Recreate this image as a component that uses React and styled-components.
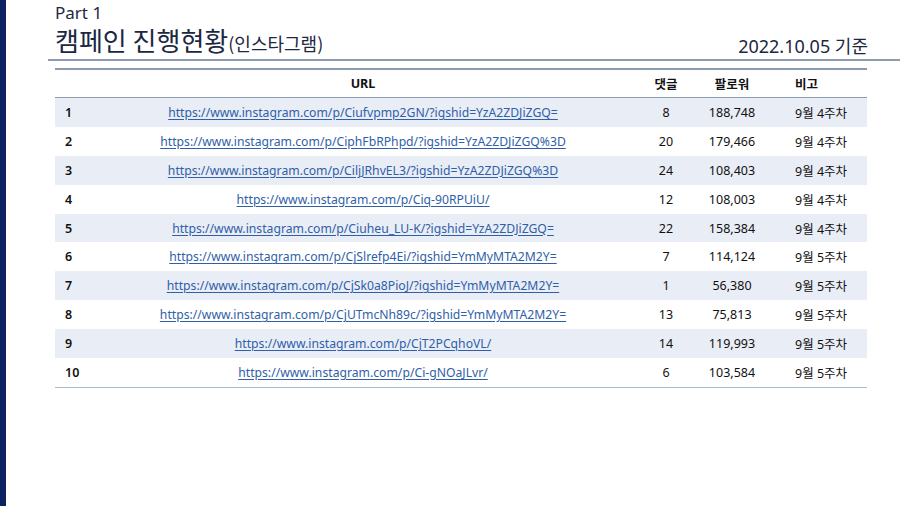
import styled, { createGlobalStyle } from 'styled-components';

const GlobalStyle = createGlobalStyle`
  html, body {
    margin: 0;
    padding: 0;
    background: #fff;
  }
  body {
    font-family: 'Noto Sans', 'Noto Sans CJK KR', sans-serif;
  }
`;

const Page = styled.div`
  width: 900px;
  height: 506px;
  display: flex;
  background: #fff;
  overflow: hidden;
`;

const SideBar = styled.div`
  width: 6px;
  background: #0b2460;
  flex-shrink: 0;
`;

const Content = styled.div`
  flex: 1;
  display: flex;
  flex-direction: column;
`;

const Header = styled.div`
  height: 61px;
  box-sizing: border-box;
  margin-left: 42px;
  padding: 0 32px 0 7px;
  border-bottom: 2px solid #8b9bb0;
  display: flex;
  align-items: flex-end;
  justify-content: space-between;
`;

const TitleBlock = styled.div`
  display: flex;
  flex-direction: column;
  margin-bottom: 4px;
`;

const PartLabel = styled.div`
  font-family: 'Noto Sans', 'Noto Sans CJK KR', sans-serif;
  font-size: 17px;
  line-height: 17px;
  margin-bottom: 4px;
  color: #1c2742;
`;

const Title = styled.h1`
  margin: 0;
  font-family: 'Noto Sans CJK KR', sans-serif;
  font-size: 26px;
  line-height: 30px;
  height: 30px;
  font-weight: 400;
  color: #1c2742;
  white-space: nowrap;
`;

const Sub = styled.span`
  font-size: 18px;
  line-height: 1;
`;

const DateText = styled.div`
  font-family: 'Noto Sans', 'Noto Sans CJK KR', sans-serif;
  font-size: 18px;
  line-height: 22px;
  color: #1c2742;
  margin-bottom: 2px;
`;

const TableWrap = styled.div`
  margin: 7px 0 0 49px;
  width: 812px;
`;

const Table = styled.table`
  width: 100%;
  border-collapse: collapse;
  table-layout: fixed;
  font-family: 'Noto Sans', 'Noto Sans CJK KR', sans-serif;
  font-size: 12.5px;
  color: #111;
  border-top: 2px solid #8b9bb0;
  border-bottom: 1px solid #a9bfd2;
`;

const Th = styled.th`
  height: 27px;
  padding: 0 0 0 ${p => p.$pl || 0}px;
  font-weight: 700;
  font-size: 12.5px;
  text-align: ${p => p.$align || 'center'};
  border-bottom: 1.5px solid #8b9bb0;
`;

const Row = styled.tr`
  background: ${p => (p.$odd ? '#e9edf6' : '#fff')};
`;

const Td = styled.td`
  height: 28.9px;
  padding: 0 0 0 ${p => p.$pl || 0}px;
  text-align: ${p => p.$align || 'center'};
  font-weight: ${p => (p.$bold ? 600 : 400)};
  white-space: nowrap;
`;

const Link = styled.a`
  color: #2f5fa8;
  font-size: 12.2px;
  text-decoration: underline;
  text-underline-offset: 2px;
`;

const rows = [
  ['https://www.instagram.com/p/Ciufvpmp2GN/?igshid=YzA2ZDJiZGQ=', '8', '188,748', '9월 4주차'],
  ['https://www.instagram.com/p/CiphFbRPhpd/?igshid=YzA2ZDJiZGQ%3D', '20', '179,466', '9월 4주차'],
  ['https://www.instagram.com/p/CiljJRhvEL3/?igshid=YzA2ZDJiZGQ%3D', '24', '108,403', '9월 4주차'],
  ['https://www.instagram.com/p/Ciq-90RPUiU/', '12', '108,003', '9월 4주차'],
  ['https://www.instagram.com/p/Ciuheu_LU-K/?igshid=YzA2ZDJiZGQ=', '22', '158,384', '9월 4주차'],
  ['https://www.instagram.com/p/CjSlrefp4Ei/?igshid=YmMyMTA2M2Y=', '7', '114,124', '9월 5주차'],
  ['https://www.instagram.com/p/CjSk0a8PioJ/?igshid=YmMyMTA2M2Y=', '1', '56,380', '9월 5주차'],
  ['https://www.instagram.com/p/CjUTmcNh89c/?igshid=YmMyMTA2M2Y=', '13', '75,813', '9월 5주차'],
  ['https://www.instagram.com/p/CjT2PCqhoVL/', '14', '119,993', '9월 5주차'],
  ['https://www.instagram.com/p/Ci-gNOaJLvr/', '6', '103,584', '9월 5주차'],
];

export default function App() {
  return (
    <Page>
      <GlobalStyle />
      <SideBar />
      <Content>
        <Header>
          <TitleBlock>
            <PartLabel>Part 1</PartLabel>
            <Title>
              캠페인 진행현황<Sub>(인스타그램)</Sub>
            </Title>
          </TitleBlock>
          <DateText>2022.10.05 기준</DateText>
        </Header>
        <TableWrap>
          <Table>
            <colgroup>
              <col style={{ width: 35 }} />
              <col style={{ width: 546 }} />
              <col style={{ width: 60 }} />
              <col style={{ width: 72 }} />
              <col style={{ width: 99 }} />
            </colgroup>
            <thead>
              <tr>
                <Th />
                <Th>URL</Th>
                <Th>댓글</Th>
                <Th>팔로워</Th>
                <Th $align="left" $pl={27}>비고</Th>
              </tr>
            </thead>
            <tbody>
              {rows.map((r, i) => (
                <Row key={i} $odd={i % 2 === 0}>
                  <Td $align="left" $pl={10} $bold>{i + 1}</Td>
                  <Td><Link href={r[0]}>{r[0]}</Link></Td>
                  <Td>{r[1]}</Td>
                  <Td>{r[2]}</Td>
                  <Td $align="left" $pl={27}>{r[3]}</Td>
                </Row>
              ))}
            </tbody>
          </Table>
        </TableWrap>
      </Content>
    </Page>
  );
}
